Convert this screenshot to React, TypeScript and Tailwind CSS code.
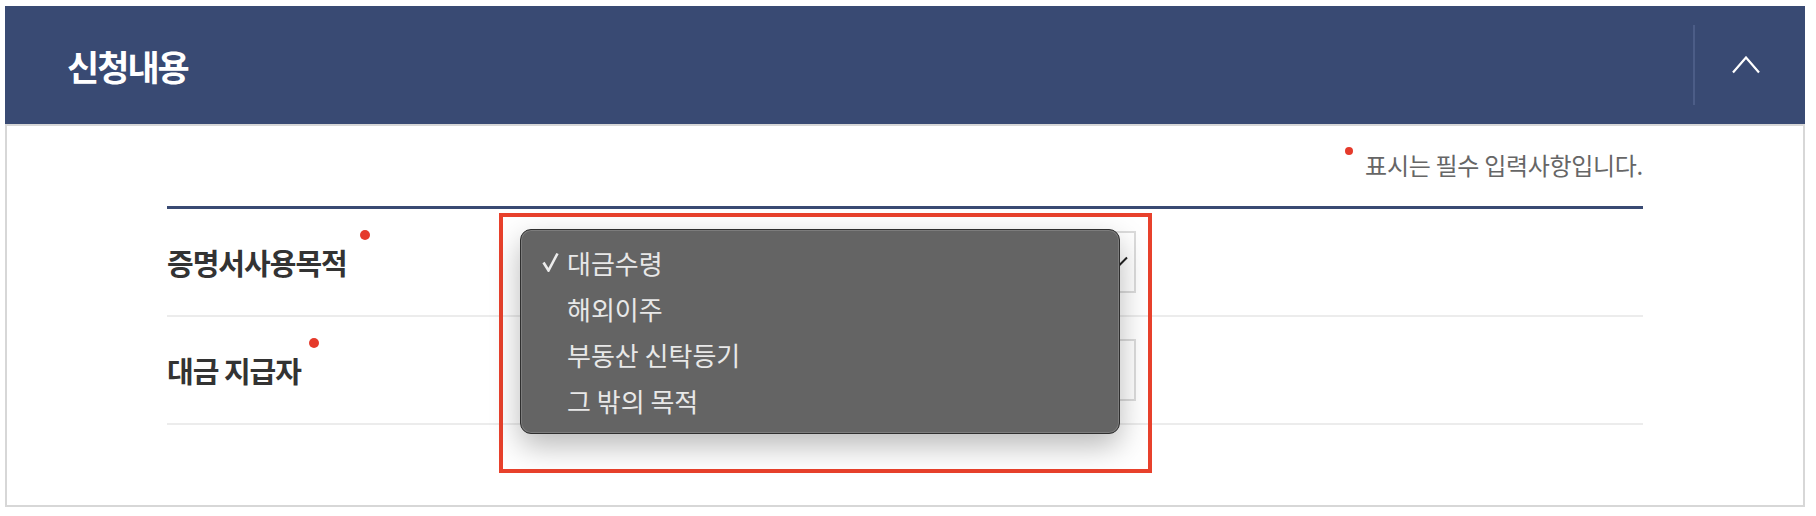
const font = { fontFamily: '"Noto Sans CJK KR", "Noto Sans", sans-serif' };

const purposes = ["대금수령", "해외이주", "부동산 신탁등기", "그 밖의 목적"];

function RequiredDot({ className = "" }: { className?: string }) {
  return <span className={`block rounded-full bg-[#e53a2b] ${className}`} />;
}

function FieldRow({
  label,
  dotClass,
  select = false,
}: {
  label: string;
  dotClass: string;
  select?: boolean;
}) {
  return (
    <div className="flex h-[108px] items-center border-b-2 border-[#ececec]">
      <div className="flex w-[361px] items-start">
        <span className="text-[29px] font-bold leading-[36px] tracking-[-1px] text-[#333]">
          {label}
        </span>
        <RequiredDot className={`h-[10px] w-[10px] -mt-[14px] ${dotClass}`} />
      </div>
      <div className="flex h-[62px] w-[608px] items-center justify-end border-2 border-[#dcdcdc] bg-white pr-[6px]">
        {select && (
          <svg width="20" height="12" viewBox="0 0 20 12" fill="none">
            <path d="M1 1.5 L10 10.5 L19 1.5" stroke="#222" strokeWidth="2" />
          </svg>
        )}
      </div>
    </div>
  );
}

export default function App() {
  return (
    <div className="min-h-screen bg-white pl-[5px] pt-[6px]" style={font}>
      <section className="relative w-[1800px]">
        <header className="flex h-[118px] items-center bg-[#394a73] pl-[62px]">
          <h2 className="text-[35px] font-bold leading-none tracking-[-2px] text-white">
            신청내용
          </h2>
          <div className="ml-auto flex h-full items-center pr-[8px]">
            <div className="h-[80px] w-[2px] bg-[#4c5d87]" />
            <button className="flex w-[102px] items-center justify-center">
              <svg width="28" height="18" viewBox="0 0 28 18" fill="none">
                <path d="M1 16.5 L14 1.5 L27 16.5" stroke="#fff" strokeWidth="2.2" />
              </svg>
            </button>
          </div>
        </header>

        <div className="border-2 border-[#d7d7d7] px-[160px] pb-[80px] pt-[24px]">
          <div className="flex justify-end">
            <p className="flex items-start text-[24px] leading-[30px] tracking-[-0.3px] text-[#666]">
              <RequiredDot className="mr-[12px] -mt-[3px] h-[8px] w-[8px]" />
              표시는 필수 입력사항입니다.
            </p>
          </div>
          <div className="mt-[26px] h-[3px] bg-[#394a73]" />
          <FieldRow label="증명서사용목적" dotClass="ml-[13px]" select />
          <FieldRow label="대금 지급자" dotClass="ml-[8px]" />
        </div>

        {/* highlight around the open select */}
        <div className="absolute left-[494px] top-[207px] h-[260px] w-[653px] border-4 border-[#e8412c]" />

        {/* native select popup */}
        <ul className="absolute left-[515px] top-[223px] h-[205px] w-[600px] rounded-[11px] border border-[#2f2f2f] bg-[#646464] pt-[9px] text-[26px] text-[#e8e8e8] shadow-[inset_0_0_0_1px_rgba(255,255,255,0.16),0_12px_30px_rgba(0,0,0,0.28)]">
          {purposes.map((p, i) => (
            <li key={p} className="flex h-[46px] items-center">
              <span className="flex w-[46px] justify-end pr-[8px]">
                {i === 0 && (
                  <svg width="17" height="20" viewBox="0 0 17 20" fill="none">
                    <path d="M1.5 10.5 L6.5 18.5 L15.5 1.5" stroke="#ececec" strokeWidth="2.6" />
                  </svg>
                )}
              </span>
              <span>{p}</span>
            </li>
          ))}
        </ul>
      </section>
    </div>
  );
}
